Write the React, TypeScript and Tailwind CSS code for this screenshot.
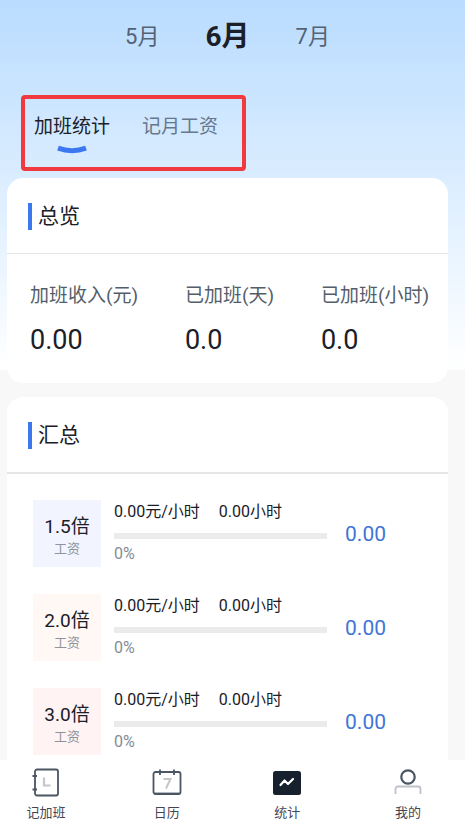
import type { ReactNode } from "react";

const months = [
  { label: "5月", active: false },
  { label: "6月", active: true },
  { label: "7月", active: false },
];

const totals = [
  { label: "加班收入(元)", value: "0.00" },
  { label: "已加班(天)", value: "0.0" },
  { label: "已加班(小时)", value: "0.0" },
];

const rates = [
  { name: "1.5倍", tint: "bg-[#f2f5ff]" },
  { name: "2.0倍", tint: "bg-[#fff8f4]" },
  { name: "3.0倍", tint: "bg-[#fff3f3]" },
];

function CardTitle({ children }: { children: ReactNode }) {
  return (
    <div className="flex items-center gap-1.5 pt-6.25 pb-5.75 pl-5.25">
      <span className="h-6.75 w-1 bg-[#3b78f0]" />
      <h2 className="text-[21px] leading-6.75">{children}</h2>
    </div>
  );
}

function NotebookIcon() {
  return (
    <svg width="30" height="30" viewBox="0 0 30 30" fill="none">
      <rect x="4" y="2.5" width="23" height="26" rx="2" stroke="#4b5563" strokeWidth="1.8" />
      <path d="M1.5 9H6M1.5 22.5H6" stroke="#4b5563" strokeWidth="1.8" />
      <path d="M13 10.5v8h6.5" stroke="#c4c6ca" strokeWidth="2.2" />
    </svg>
  );
}

function CalendarIcon() {
  return (
    <svg width="30" height="30" viewBox="0 0 30 30" fill="none">
      <rect x="1.5" y="5" width="27" height="22" rx="2" stroke="#4b5563" strokeWidth="1.8" />
      <path d="M2.5 26.5h25" stroke="#4b5563" strokeWidth="1.8" />
      <path d="M8 2.5V8M22 2.5V8" stroke="#4b5563" strokeWidth="1.8" />
      <path d="M11.5 12h7L14 21.5" stroke="#c4c6ca" strokeWidth="2" />
    </svg>
  );
}

function StatsIcon() {
  return (
    <svg width="30" height="30" viewBox="0 0 30 30" fill="none">
      <rect x="1" y="4" width="28" height="24" rx="2.5" fill="#17202d" />
      <path d="M8.5 18l4-4.5 3.5 3.5 5-5" stroke="#fff" strokeWidth="2.2" strokeLinecap="round" strokeLinejoin="round" />
    </svg>
  );
}

function UserIcon() {
  return (
    <svg width="30" height="30" viewBox="0 0 30 30" fill="none">
      <circle cx="15" cy="10" r="6.7" stroke="#4b5563" strokeWidth="2.2" />
      <path d="M2.5 27v-5a2.5 2.5 0 0 1 2.5-2.5h20a2.5 2.5 0 0 1 2.5 2.5v5" stroke="#bfc2c8" strokeWidth="1.8" />
    </svg>
  );
}

const navItems = [
  { label: "记加班", icon: <NotebookIcon /> },
  { label: "日历", icon: <CalendarIcon /> },
  { label: "统计", icon: <StatsIcon /> },
  { label: "我的", icon: <UserIcon /> },
];

export default function App() {
  return (
    <div className="flex h-screen flex-col bg-white font-[Roboto,'Noto_Sans_CJK_SC',sans-serif] text-[#1b2028]">
      <main className="min-h-0 flex-1 overflow-hidden bg-[linear-gradient(to_bottom,#b9dcff,#ffffff_370px,#f8f8f8_370px)] pr-4.25 pl-1.75">
        <div className="flex h-18 items-center justify-center gap-11.5 pt-0.5">
          {months.map((m) => (
            <button
              key={m.label}
              className={m.active ? "text-[28px] leading-8 font-bold" : "text-[22px] leading-8 text-[#536274]"}
            >
              {m.label}
            </button>
          ))}
        </div>

        <nav className="mt-5.75 ml-3.5 flex h-19 w-56.25 gap-8 rounded-[4px] border-4 border-[#f03a3e] pt-3.5 pl-2.25">
          <button className="flex flex-col items-center text-[19px] leading-7">
            加班统计
            <svg width="30" height="10" viewBox="0 0 30 10" fill="none" className="mt-1">
              <path d="M1 3.2Q15 8.2 29 3.2" stroke="#3b78f0" strokeWidth="5" />
            </svg>
          </button>
          <button className="flex flex-col text-[19px] leading-7 text-[#66788c]">记月工资</button>
        </nav>

        <section className="mt-1.75 rounded-2xl bg-white">
          <CardTitle>总览</CardTitle>
          <dl className="flex justify-between border-t border-[#e4e5e7] pt-7 pr-4.75 pb-6.75 pl-5.75">
            {totals.map((t) => (
              <div key={t.label}>
                <dt className="text-[19px] leading-7 text-[#545e6b]">{t.label}</dt>
                <dd className="mt-3.5 text-[27px] leading-8">{t.value}</dd>
              </div>
            ))}
          </dl>
        </section>

        <section className="mt-3.5 rounded-t-2xl bg-white">
          <CardTitle>汇总</CardTitle>
          <ul className="flex flex-col gap-6.75 border-t-2 border-[#e6e6e6] pt-6.5 pr-15.5 pb-6 pl-6.5">
            {rates.map((r) => (
              <li key={r.name} className="flex items-center">
                <div className={`flex h-16.75 w-17 shrink-0 flex-col items-center justify-center pt-1.5 ${r.tint}`}>
                  <span className="text-[19px] leading-6">{r.name}</span>
                  <span className="text-[13px] leading-5 text-[#8f949c]">工资</span>
                </div>
                <div className="ml-3.25 flex-1 pb-0.5 text-[16px]">
                  <div className="flex gap-4.75 leading-5">
                    <span>0.00元/小时</span>
                    <span>0.00小时</span>
                  </div>
                  <div className="mt-2.75 h-1.5 bg-[#ebebeb]" />
                  <div className="mt-1.25 leading-5 text-[#858c95]">0%</div>
                </div>
                <span className="ml-4.5 text-[21px] leading-6 text-[#3f75d6]">0.00</span>
              </li>
            ))}
          </ul>
        </section>
      </main>

      <nav className="flex justify-between bg-white pt-1.75 pr-8.75 pb-0 pl-6">
        {navItems.map((n) => (
          <button key={n.label} className="flex w-11 flex-col items-center text-[13px] leading-5 text-[#3f4754]">
            {n.icon}
            <span className="mt-1.5">{n.label}</span>
          </button>
        ))}
      </nav>
    </div>
  );
}
